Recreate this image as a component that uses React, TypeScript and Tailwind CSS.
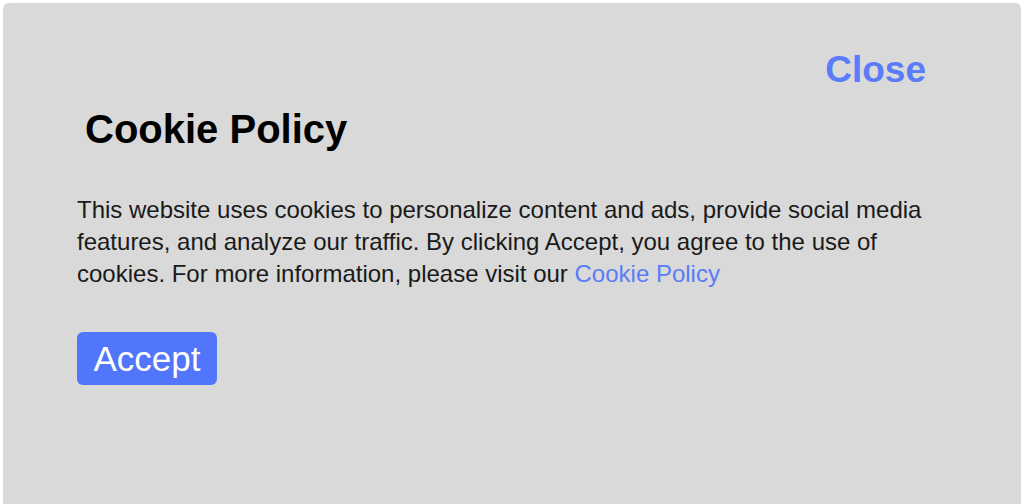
export default function App() {
  return (
    <div className="w-[1024px] h-[504px] bg-white p-[3px] pb-0 overflow-hidden" style={{ fontFamily: '"Liberation Sans", Arial, sans-serif' }}>
      <div className="h-[510px] bg-[#d9d9d9] rounded-[6px] pl-[74px] pr-[92px] pt-[45px]">
        <div className="flex justify-end pr-[3px]">
          <button className="text-[37px] leading-[44px] font-bold text-[#5a7cf8]">Close</button>
        </div>
        <h1 className="mt-[13px] ml-[8px] text-[40px] leading-[48px] font-bold text-black">Cookie Policy</h1>
        <p className="mt-[41px] text-[24px] leading-[32px] text-[#1a1a1a]">
          This website uses cookies to personalize content and ads, provide social media features, and analyze our traffic. By clicking Accept, you agree to the use of cookies. For more information, please visit our <a className="text-[#5a7cf8]">Cookie Policy</a>
        </p>
        <button className="mt-[42px] w-[140px] h-[53px] rounded-[6px] bg-[#5176fb] text-white text-[35px] leading-none">Accept</button>
      </div>
    </div>
  );
}
